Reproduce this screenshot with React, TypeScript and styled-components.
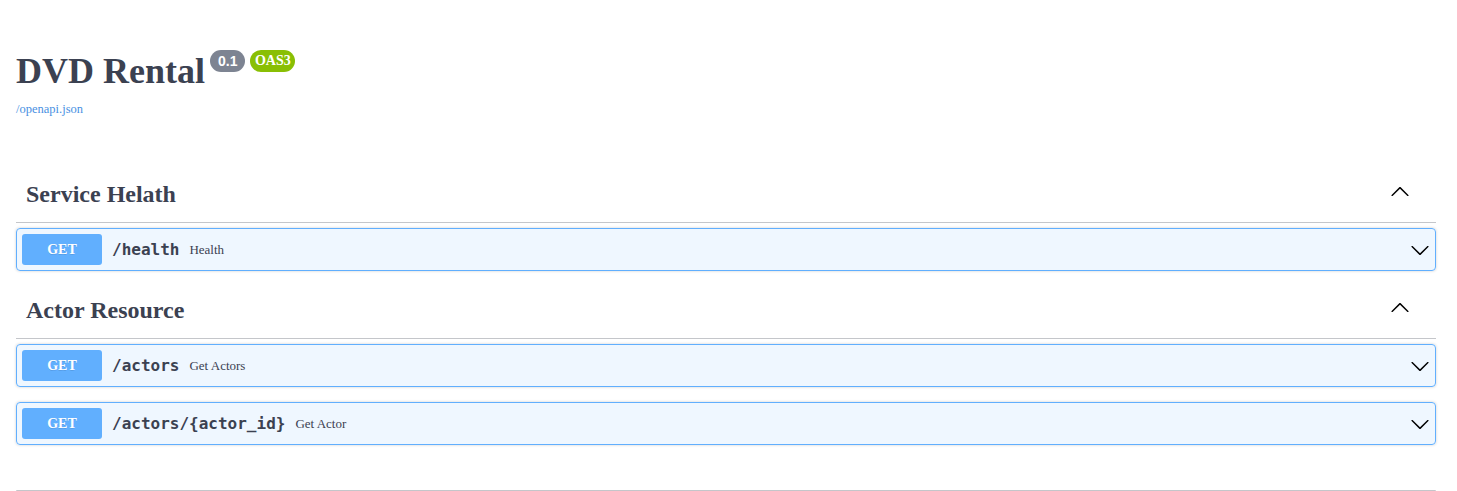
import React from "react";
import styled, { createGlobalStyle } from "styled-components";

const GlobalStyle = createGlobalStyle`
  html, body { margin: 0; padding: 0; background: #fff; }
  body { font-family: "Liberation Serif", "Times New Roman", serif; color: #3b4151; }
`;

const Wrapper = styled.div`
  display: flex;
  flex-direction: column;
  padding: 0 21px 0 16px;
`;

const TitleRow = styled.div`
  display: flex;
  align-items: flex-start;
  padding-top: 50px;
`;

const Title = styled.h2`
  margin: 3px 0 0;
  font-family: "Liberation Serif", serif;
  font-size: 36px;
  line-height: 36px;
  font-weight: 700;
  color: #3b4151;
`;

const Badge = styled.span<{ $bg: string; $sans?: boolean }>`
  display: inline-block;
  margin-left: 5px;
  padding: 4px ${(p) => (p.$sans ? "8px" : "4.5px")};
  border-radius: 57px;
  background: ${(p) => p.$bg};
  color: #fff;
  font-family: ${(p) => (p.$sans ? '"Liberation Sans", sans-serif' : '"Liberation Serif", serif')};
  font-weight: 700;
  font-size: 14px;
  line-height: 14px;
`;

const SpecLink = styled.a`
  margin: 13px 0 54px;
  font-family: "Liberation Serif", serif;
  font-size: 12.5px;
  line-height: 14px;
  color: #4990e2;
  text-decoration: none;
`;

const TagHeader = styled.h3`
  display: flex;
  align-items: center;
  height: 32px;
  margin: 0 0 5px;
  padding: 10px 20px 10px 10px;
  border-bottom: 1px solid rgba(59, 65, 81, 0.3);
`;

const TagTitle = styled.span`
  flex: 1;
  padding-bottom: 3px;
  font-family: "Liberation Serif", serif;
  font-size: 24px;
  font-weight: 700;
  color: #3b4151;
`;

const ArrowButton = styled.button<{ $lift?: boolean }>`
  display: flex;
  padding: 0 ${(p) => (p.$lift ? "6px" : "0")};
  margin-bottom: ${(p) => (p.$lift ? "8px" : "0")};
  border: none;
  background: none;
  cursor: pointer;
`;

const Opblock = styled.div`
  margin: 0 0 15px;
  border: 1px solid #61affe;
  border-radius: 4px;
  background: rgba(97, 175, 254, 0.1);
  box-shadow: 0 0 3px rgba(0, 0, 0, 0.19);
`;

const Summary = styled.div`
  display: flex;
  align-items: center;
  padding: 5px;
`;

const Method = styled.span`
  display: flex;
  align-items: center;
  justify-content: center;
  width: 80px;
  height: 31px;
  border-radius: 3px;
  background: #61affe;
  color: #fff;
  font-family: "Liberation Serif", serif;
  font-size: 14px;
  font-weight: 700;
  text-shadow: 0 1px 0 rgba(0, 0, 0, 0.1);
`;

const Path = styled.span`
  padding: 0 10px;
  font-family: "DejaVu Sans Mono", monospace;
  font-size: 16px;
  font-weight: 700;
  color: #3b4151;
`;

const Description = styled.span`
  flex: 1;
  font-family: "Liberation Serif", serif;
  font-size: 13px;
  color: #3b4151;
`;

const SchemaBox = styled.section`
  margin-top: 30px;
  height: 0;
  border-top: 1px solid rgba(59, 65, 81, 0.3);
  border-radius: 4px 4px 0 0;
`;

const Chevron = ({ up }: { up?: boolean }) => (
  <svg width="20" height="20" viewBox="0 0 20 20" fill="#000">
    <path
      transform={up ? "rotate(180 10 10)" : undefined}
      d="M17.418 6.109c.272-.268.709-.268.979 0s.271.701 0 .969l-7.908 7.83c-.27.268-.707.268-.979 0l-7.908-7.83c-.27-.268-.27-.701 0-.969.271-.268.709-.268.979 0L10 13.25l7.418-7.141z"
    />
  </svg>
);

type Op = { path: string; summary: string };
const sections: { name: string; ops: Op[] }[] = [
  { name: "Service Helath", ops: [{ path: "/health", summary: "Health" }] },
  {
    name: "Actor Resource",
    ops: [
      { path: "/actors", summary: "Get Actors" },
      { path: "/actors/{actor_id}", summary: "Get Actor" },
    ],
  },
];

export default function App() {
  return (
    <>
      <GlobalStyle />
      <Wrapper>
        <TitleRow>
          <Title>DVD Rental</Title>
          <Badge $bg="#7d8492" $sans>0.1</Badge>
          <Badge $bg="#89bf04">OAS3</Badge>
        </TitleRow>
        <SpecLink href="#">/openapi.json</SpecLink>
        {sections.map((s) => (
          <React.Fragment key={s.name}>
            <TagHeader>
              <TagTitle>{s.name}</TagTitle>
              <ArrowButton $lift aria-label="collapse">
                <Chevron up />
              </ArrowButton>
            </TagHeader>
            {s.ops.map((op) => (
              <Opblock key={op.path}>
                <Summary>
                  <Method>GET</Method>
                  <Path>{op.path}</Path>
                  <Description>{op.summary}</Description>
                  <ArrowButton aria-label="expand">
                    <Chevron />
                  </ArrowButton>
                </Summary>
              </Opblock>
            ))}
          </React.Fragment>
        ))}
        <SchemaBox />
      </Wrapper>
    </>
  );
}
